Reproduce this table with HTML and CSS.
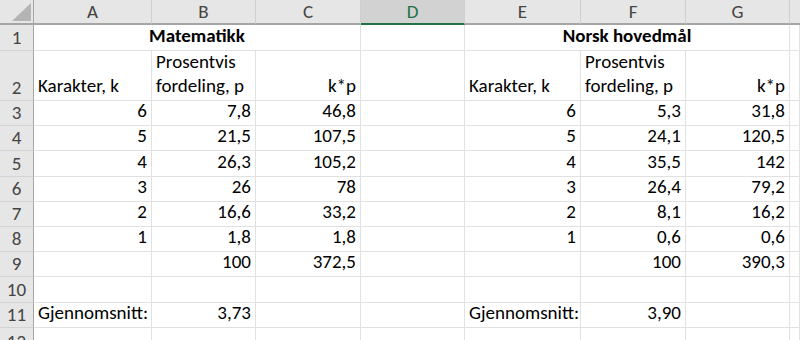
FILE: index.html
```html
<!DOCTYPE html>
<html lang="no">
<head>
    <meta charset="UTF-8">
    <meta name="viewport" content="width=device-width, initial-scale=1.0">
    <title>Karakterfordeling</title>
    <link rel="stylesheet" href="styles.css">
</head>
<body>

    <div class="sheet">
        <!-- column headers -->
        <div class="corner"><span class="tri"></span></div>
        <div class="col-head">A</div>
        <div class="col-head">B</div>
        <div class="col-head">C</div>
        <div class="col-head active">D</div>
        <div class="col-head">E</div>
        <div class="col-head">F</div>
        <div class="col-head">G</div>
        <div class="col-head last"></div>

        <!-- row 1 -->
        <div class="row-head">1</div>
        <div class="cell title">Matematikk</div>
        <div class="cell"></div>
        <div class="cell title">Norsk hovedmål</div>
        <div class="cell"></div>

        <!-- row 2 -->
        <div class="row-head">2</div>
        <div class="cell">Karakter, k</div>
        <div class="cell">Prosentvis fordeling, p</div>
        <div class="cell num">k*p</div>
        <div class="cell"></div>
        <div class="cell">Karakter, k</div>
        <div class="cell">Prosentvis fordeling, p</div>
        <div class="cell num">k*p</div>
        <div class="cell"></div>

        <!-- row 3 -->
        <div class="row-head">3</div>
        <div class="cell num">6</div>
        <div class="cell num">7,8</div>
        <div class="cell num">46,8</div>
        <div class="cell"></div>
        <div class="cell num">6</div>
        <div class="cell num">5,3</div>
        <div class="cell num">31,8</div>
        <div class="cell"></div>

        <!-- row 4 -->
        <div class="row-head">4</div>
        <div class="cell num">5</div>
        <div class="cell num">21,5</div>
        <div class="cell num">107,5</div>
        <div class="cell"></div>
        <div class="cell num">5</div>
        <div class="cell num">24,1</div>
        <div class="cell num">120,5</div>
        <div class="cell"></div>

        <!-- row 5 -->
        <div class="row-head">5</div>
        <div class="cell num">4</div>
        <div class="cell num">26,3</div>
        <div class="cell num">105,2</div>
        <div class="cell"></div>
        <div class="cell num">4</div>
        <div class="cell num">35,5</div>
        <div class="cell num">142</div>
        <div class="cell"></div>

        <!-- row 6 -->
        <div class="row-head">6</div>
        <div class="cell num">3</div>
        <div class="cell num">26</div>
        <div class="cell num">78</div>
        <div class="cell"></div>
        <div class="cell num">3</div>
        <div class="cell num">26,4</div>
        <div class="cell num">79,2</div>
        <div class="cell"></div>

        <!-- row 7 -->
        <div class="row-head">7</div>
        <div class="cell num">2</div>
        <div class="cell num">16,6</div>
        <div class="cell num">33,2</div>
        <div class="cell"></div>
        <div class="cell num">2</div>
        <div class="cell num">8,1</div>
        <div class="cell num">16,2</div>
        <div class="cell"></div>

        <!-- row 8 -->
        <div class="row-head">8</div>
        <div class="cell num">1</div>
        <div class="cell num">1,8</div>
        <div class="cell num">1,8</div>
        <div class="cell"></div>
        <div class="cell num">1</div>
        <div class="cell num">0,6</div>
        <div class="cell num">0,6</div>
        <div class="cell"></div>

        <!-- row 9: sums -->
        <div class="row-head">9</div>
        <div class="cell"></div>
        <div class="cell num">100</div>
        <div class="cell num">372,5</div>
        <div class="cell"></div>
        <div class="cell"></div>
        <div class="cell num">100</div>
        <div class="cell num">390,3</div>
        <div class="cell"></div>

        <!-- row 10 -->
        <div class="row-head">10</div>
        <div class="cell"></div>
        <div class="cell"></div>
        <div class="cell"></div>
        <div class="cell"></div>
        <div class="cell"></div>
        <div class="cell"></div>
        <div class="cell"></div>
        <div class="cell"></div>

        <!-- row 11: averages -->
        <div class="row-head">11</div>
        <div class="cell">Gjennomsnitt:</div>
        <div class="cell num">3,73</div>
        <div class="cell"></div>
        <div class="cell"></div>
        <div class="cell">Gjennomsnitt:</div>
        <div class="cell num">3,90</div>
        <div class="cell"></div>
        <div class="cell"></div>

        <!-- row 12 (cut off) -->
        <div class="row-head top">12</div>
        <div class="cell"></div>
        <div class="cell"></div>
        <div class="cell"></div>
        <div class="cell"></div>
        <div class="cell"></div>
        <div class="cell"></div>
        <div class="cell"></div>
        <div class="cell"></div>
    </div>

</body>
</html>
```

FILE: styles.css
```css
html, body {
    margin: 0;
    padding: 0;
    height: 100%;
    overflow: hidden;
    background: #fff;
}

.sheet {
    display: grid;
    grid-template-columns: 34px 118px 104px 105px 104px 116px 105px 104px 1fr;
    grid-template-rows: 25px 25.5px 50.5px repeat(9, 25.2px) 1fr;
    height: 340px;
    font-family: Carlito, Calibri, Lato, sans-serif;
    font-size: 19px;
    color: #000;
}

.corner,
.col-head,
.row-head {
    background: #e6e6e6;
    color: #444;
    box-sizing: border-box;
}

.corner {
    position: relative;
    border-right: 1px solid #a5a5a5;
    border-bottom: 2px solid #a5a5a5;
}

/* little triangle in the select-all box */
.tri {
    position: absolute;
    right: 2px;
    bottom: 2px;
    width: 19px;
    height: 18px;
    background: #b4b4b4;
    clip-path: polygon(100% 0, 100% 100%, 0 100%);
}

.col-head {
    display: flex;
    align-items: center;
    justify-content: center;
    border-right: 1px solid #cfcfcf;
    border-bottom: 2px solid #a5a5a5;
}

.col-head.active {
    background: #d2d2d2;
    color: #217346;
    border-bottom-color: #217346;
}

.col-head.last {
    border-right: none;
}

.row-head {
    display: flex;
    align-items: flex-end;
    justify-content: center;
    padding-bottom: 2px;
    line-height: 20px;
    border-right: 1px solid #a5a5a5;
    border-bottom: 1px solid #d4d4d4;
}

.row-head.top {
    align-items: flex-start;
    padding-top: 4px;
}

.cell {
    display: flex;
    align-items: flex-end;
    box-sizing: border-box;
    padding: 0 4px 2px 4px;
    line-height: 24px;
    border-right: 1px solid #e1e1e1;
    border-bottom: 1px solid #e1e1e1;
    white-space: normal;
}

.num {
    justify-content: flex-end;
    text-align: right;
}

.title {
    grid-column: span 3;
    justify-content: center;
    font-weight: bold;
}
```
